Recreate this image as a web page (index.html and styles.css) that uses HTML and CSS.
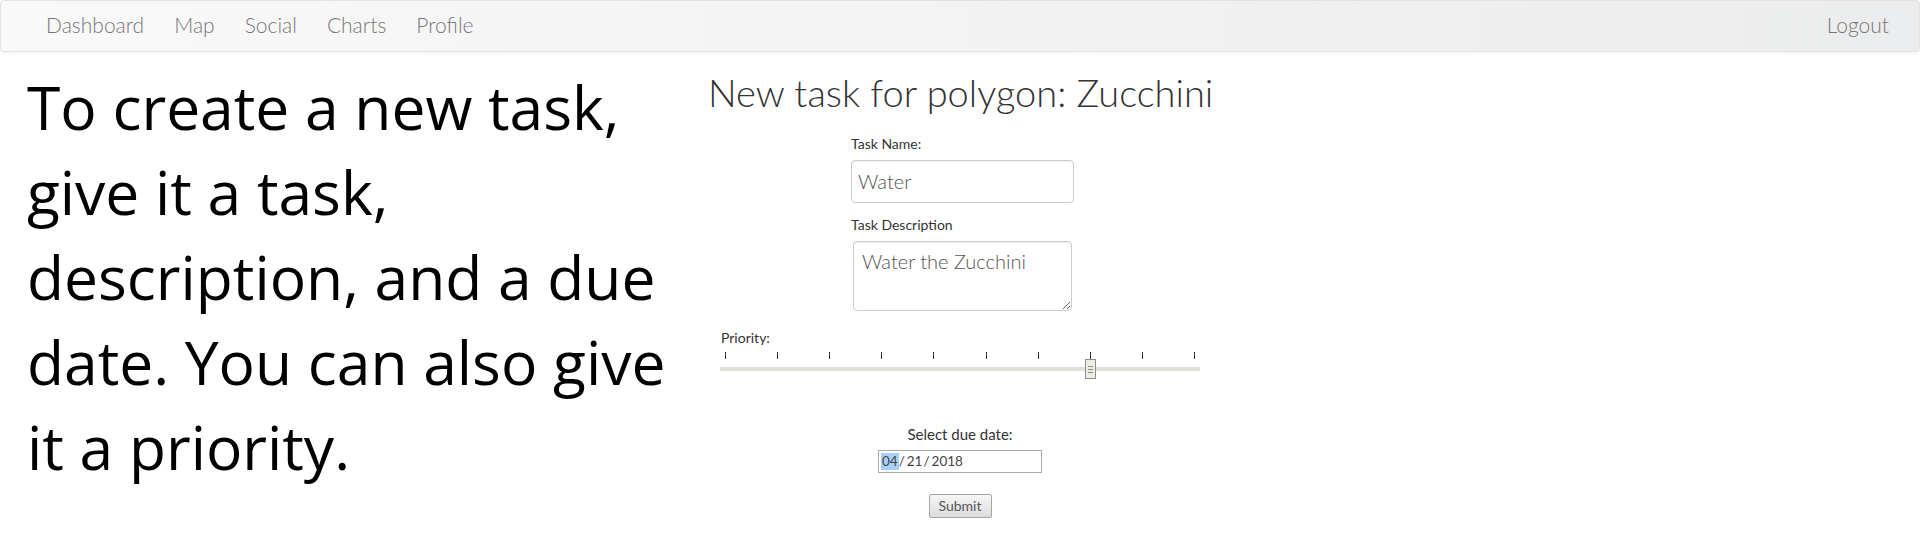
FILE: index.html
```html
<!DOCTYPE html>
<html lang="en">
<head>
<meta charset="utf-8">
<title>New task</title>
<link rel="stylesheet" href="styles.css">
</head>
<body>
<nav class="navbar">
  <ul class="nav-list">
    <li><a class="nav-link" href="#">Dashboard</a></li>
    <li><a class="nav-link" href="#">Map</a></li>
    <li><a class="nav-link" href="#">Social</a></li>
    <li><a class="nav-link" href="#">Charts</a></li>
    <li><a class="nav-link" href="#">Profile</a></li>
  </ul>
  <ul class="nav-list">
    <li><a class="nav-link" href="#">Logout</a></li>
  </ul>
</nav>
<main class="content">
  <section class="intro">
    <p>To create a new task, give it a task, description, and a due date. You can also give it a priority.</p>
  </section>
  <section class="task">
    <h1 class="task-title">New task for polygon: Zucchini</h1>
    <form class="form">
      <div class="field">
        <label class="label" for="name">Task Name:</label>
        <input class="field-input" id="name" type="text" value="Water">
      </div>
      <div class="field field-desc">
        <label class="label" for="desc">Task Description</label>
        <textarea class="field-area" id="desc">Water the Zucchini</textarea>
      </div>
      <div class="priority">
        <label class="label" for="prio">Priority:</label>
        <div class="ticks">
          <span class="tick"></span><span class="tick"></span><span class="tick"></span><span class="tick"></span><span class="tick"></span>
          <span class="tick"></span><span class="tick"></span><span class="tick"></span><span class="tick"></span><span class="tick"></span>
        </div>
        <input class="slider" id="prio" type="range" min="1" max="10" value="8">
      </div>
      <div class="due">
        <span class="label">Select due date:</span>
        <div class="date">
          <span class="seg seg-active">04</span><span class="sep">/</span><span class="seg">21</span><span class="sep">/</span><span class="seg">2018</span>
        </div>
      </div>
      <button class="submit" type="button">Submit</button>
    </form>
  </section>
</main>
</body>
</html>
```

FILE: styles.css
```css
body {
  margin: 0;
  font-family: "Lato", "Open Sans", sans-serif;
  color: #333;
  background: #fff;
}

.navbar {
  display: flex;
  justify-content: space-between;
  height: 52px;
  box-sizing: border-box;
  border: 1px solid #e3e3e3;
  border-radius: 4px;
  background: linear-gradient(to right, #f9f9f9, #ebeced);
  box-shadow: 0 1px 4px rgba(0, 0, 0, 0.06);
  padding: 0 15px 0 30px;
}

.nav-list {
  display: flex;
  list-style: none;
  margin: 0;
  padding: 0;
}

.nav-link {
  display: block;
  padding: 14px 15px 16px;
  line-height: 20px;
  font-size: 21px;
  font-weight: 300;
  color: #777;
  text-decoration: none;
}

.content {
  display: flex;
  align-items: flex-start;
}

.intro {
  flex: none;
  width: 666px;
  padding: 12px 0 0 27px;
}

.intro p {
  margin: 0;
  font-family: "Open Sans", "Noto Sans", sans-serif;
  font-size: 60.5px;
  line-height: 85px;
  color: #000;
}

.task {
  flex: none;
  width: 504px;
  padding: 20px 15px 0;
}

.task-title {
  margin: 0;
  font-size: 38px;
  font-weight: 300;
  line-height: 1.1;
  color: #333;
  white-space: nowrap;
}

.form {
  display: flex;
  flex-direction: column;
  align-items: center;
  margin-top: 20px;
}

.label {
  font-size: 14px;
  line-height: 20px;
  color: #333;
}

.field {
  display: flex;
  flex-direction: column;
  width: 223px;
  margin-left: 5px;
}

.field-desc {
  margin-top: 12px;
}

.field-input {
  margin: 6px 0 0;
  height: 43px;
  box-sizing: border-box;
  border: 1px solid #ccc;
  border-radius: 4px;
  padding: 0 6px;
  font-family: "Lato", sans-serif;
  font-weight: 300;
  font-size: 20px;
  color: #555;
  box-shadow: inset 0 1px 1px rgba(0, 0, 0, 0.075);
}

.field-area {
  display: block;
  margin: 6px 2px 0;
  width: 219px;
  height: 70px;
  box-sizing: border-box;
  border: 1px solid #ccc;
  border-radius: 4px;
  padding: 7px 8px;
  font-family: "Lato", sans-serif;
  font-weight: 300;
  font-size: 20px;
  line-height: 24px;
  color: #555;
  box-shadow: inset 0 1px 1px rgba(0, 0, 0, 0.075);
}

.priority {
  display: flex;
  flex-direction: column;
  width: 480px;
  margin-top: 17px;
}

.priority .label {
  padding-left: 1px;
}

.ticks {
  display: flex;
  justify-content: space-between;
  height: 7px;
  margin-top: 4px;
  padding: 0 5px;
}

.tick {
  width: 1px;
  height: 7px;
  background: #333;
}

.slider {
  -webkit-appearance: none;
  appearance: none;
  display: block;
  width: 480px;
  height: 20px;
  margin: 0;
  background: transparent;
}

.slider::-webkit-slider-runnable-track {
  height: 4px;
  background: #e2ded8;
}

.slider::-webkit-slider-thumb {
  -webkit-appearance: none;
  appearance: none;
  width: 11px;
  height: 20px;
  margin-top: -8px;
  box-sizing: border-box;
  border: 1px solid #928d88;
  background:
    linear-gradient(#8f8b87, #8f8b87) center 6px / 5px 1px no-repeat,
    linear-gradient(#8f8b87, #8f8b87) center 9px / 5px 1px no-repeat,
    linear-gradient(#8f8b87, #8f8b87) center 12px / 5px 1px no-repeat,
    #efece8;
}

.due {
  display: flex;
  flex-direction: column;
  align-items: center;
  margin-top: 45px;
}

.due .label {
  font-size: 15px;
}

.date {
  display: flex;
  align-items: center;
  margin-top: 6px;
  width: 164px;
  height: 23px;
  box-sizing: border-box;
  border: 1px solid #a9a9a9;
  padding: 0 2px;
  font-size: 13.5px;
  color: #444;
}

.seg {
  padding: 0 1px;
  line-height: 17px;
}

.seg-active {
  background: #a9d0fa;
}

.sep {
  margin: 0 1px 0 0;
}

.submit {
  margin-top: 21px;
  height: 24px;
  box-sizing: border-box;
  padding: 0 9px;
  border: 1px solid #a5a5a5;
  border-radius: 2px;
  background: linear-gradient(#f6f6f6, #dcdcdc);
  font-family: "Lato", sans-serif;
  font-size: 14px;
  color: #555;
}
```
